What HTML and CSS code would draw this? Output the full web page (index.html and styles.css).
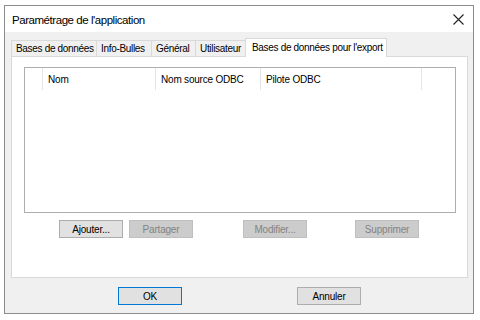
FILE: index.html
```html
<!DOCTYPE html>
<html lang="fr">
<head>
    <meta charset="UTF-8">
    <title>Paramétrage de l'application</title>
    <link rel="stylesheet" href="styles.css">
</head>
<body>

<div class="window">
    <div class="titlebar">
        <span class="title">Paramétrage de l'application</span>
        <span class="close">
            <svg width="11" height="11" viewBox="0 0 11 11"><path d="M0.5 0.5 L10.5 10.5 M10.5 0.5 L0.5 10.5" stroke="#222" stroke-width="1.1" fill="none"/></svg>
        </span>
    </div>

    <div class="client">
        <div class="tabs">
            <div class="tab t1">Bases de données</div>
            <div class="tab t2">Info-Bulles</div>
            <div class="tab t3">Général</div>
            <div class="tab t4">Utilisateur</div>
            <div class="tab active">Bases de données pour l'export</div>
        </div>

        <div class="panel">
            <div class="listview">
                <div class="list-header">
                    <div class="col col-icon"></div>
                    <div class="col col-nom">Nom</div>
                    <div class="col col-source">Nom source ODBC</div>
                    <div class="col col-pilote">Pilote ODBC</div>
                </div>
            </div>

            <div class="list-buttons">
                <button class="btn b-add">Ajouter...</button>
                <button class="btn b-share" disabled>Partager</button>
                <button class="btn b-edit" disabled>Modifier...</button>
                <button class="btn b-del" disabled>Supprimer</button>
            </div>
        </div>

        <div class="dialog-buttons">
            <button class="btn default">OK</button>
            <button class="btn b-cancel">Annuler</button>
        </div>
    </div>
</div>

</body>
</html>
```

FILE: styles.css
```css
body, html {
    font-family: 'Liberation Sans', Arial, sans-serif;
    font-size: 10px;
    letter-spacing: -0.2px;
    margin: 0;
    padding: 0;
    background: #ffffff;
    color: #000;
}

* {
    box-sizing: border-box;
}

.window {
    width: 470px;
    height: 309px;
    margin: 5px 0 0 4px;
    border: 1px solid #8c8c8c;
    display: flex;
    flex-direction: column;
    background: #f0f0f0;
}

.titlebar {
    height: 26px;
    background: #ffffff;
    display: flex;
    align-items: center;
    padding: 0 9px 0 7px;
}

.title {
    font-size: 11.5px;
    letter-spacing: -0.45px;
    flex-grow: 1;
    padding-top: 1px;
}

.close {
    display: flex;
    align-items: center;
}

.client {
    flex-grow: 1;
    display: flex;
    flex-direction: column;
    padding: 6px 6px 0 6px;
}

.tabs {
    display: flex;
    align-items: flex-end;
    height: 18px;
    position: relative;
    z-index: 1;
}

.tab {
    height: 16px;
    line-height: 15px;
    padding: 0 0 0 4px;
    border: 1px solid #d9d9d9;
    border-bottom: none;
    background: #f0f0f0;
    white-space: nowrap;
    letter-spacing: -0.32px;
}

.tab + .tab {
    border-left: none;
}

.tab.active {
    height: 19px;
    line-height: 18px;
    background: #ffffff;
    border-left: 1px solid #d9d9d9;
    margin-left: -1px;
    margin-bottom: -1px;
    padding: 0 0 0 6px;
}

.t1 { width: 86px; }
.t2 { width: 55px; }
.t3 { width: 44px; }
.t4 { width: 50px; }
.active { width: 142px; }

.panel {
    height: 222px;
    width: 457px;
    background: #ffffff;
    border: 1px solid #d9d9d9;
    padding: 10px 11px 0 12px;
    display: flex;
    flex-direction: column;
}

.listview {
    height: 146px;
    width: 432px;
    border: 1px solid #adadad;
    background: #ffffff;
}

.list-header {
    display: flex;
    height: 22px;
}

.col {
    border-right: 1px solid #e5e5e5;
    padding: 6px 0 0 5px;
    white-space: nowrap;
}

.col-icon { width: 18px; }
.col-nom { width: 113px; }
.col-source { width: 105px; }
.col-pilote { width: 161px; }

.list-buttons {
    display: flex;
    margin-top: 7px;
    padding-left: 35px;
}

.btn {
    font-family: 'Liberation Sans', Arial, sans-serif;
    font-size: 10px;
    letter-spacing: -0.2px;
    height: 18px;
    width: 64px;
    padding: 0;
    background: #e1e1e1;
    border: 1px solid #adadad;
    color: #000;
}

.btn:disabled {
    background: #cccccc;
    border-color: #bfbfbf;
    color: #838383;
}

.b-share { margin-left: 6px; }
.b-edit { margin-left: 50px; }
.b-del { margin-left: 48px; }

.dialog-buttons {
    display: flex;
    padding: 9px 0 0 107px;
}

.btn.default {
    border: 1px solid #0078d7;
}

.b-cancel {
    margin-left: 115px;
}
```
